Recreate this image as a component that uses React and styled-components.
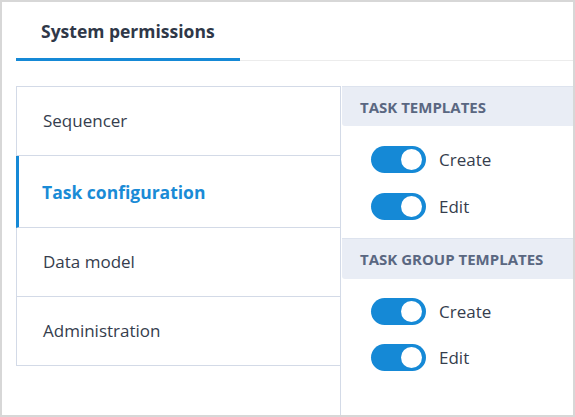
import React from "react";
import styled, { createGlobalStyle } from "styled-components";

const Global = createGlobalStyle`
  html, body { margin: 0; padding: 0; background: #ffffff; }
  * { box-sizing: border-box; }
  body { font-family: "Open Sans", "Liberation Sans", sans-serif; }
`;

const Frame = styled.div`
  width: 575px;
  height: 417px;
  border: 2px solid #d7d7d7;
  background: #ffffff;
  display: flex;
  flex-direction: column;
  overflow: hidden;
`;

const TabBar = styled.div`
  display: flex;
  margin-left: 14px;
  border-bottom: 1px solid #ececec;
`;

const Tab = styled.div`
  width: 224px;
  height: 59px;
  padding: 17px 0 0 25px;
  font-size: 17.5px;
  font-weight: 700;
  color: #2f3848;
  border-bottom: 3px solid ${(p) => (p.$active ? "#1589d6" : "transparent")};
  margin-bottom: -1px;
`;

const Body = styled.div`
  flex: 1;
  display: flex;
  margin: 25px 0 0 14px;
`;

const Nav = styled.div`
  width: 324px;
  align-self: flex-start;
  border-left: 1px solid #d3dae7;
  border-top: 1px solid #d3dae7;
`;

const NavItem = styled.div`
  height: ${(p) => (p.$h || 69)}px;
  display: flex;
  align-items: center;
  padding-left: ${(p) => (p.$active ? 23 : 26)}px;
  padding-bottom: ${(p) => (p.$active ? 0 : 2)}px;
  border-bottom: 1px solid #d3dae7;
  border-left: ${(p) => (p.$active ? "3px solid #1589d6" : "none")};
  margin-left: ${(p) => (p.$active ? "-1px" : "0")};
  font-size: ${(p) => (p.$active ? 17.5 : 17)}px;
  font-weight: ${(p) => (p.$active ? 700 : 400)};
  color: ${(p) => (p.$active ? "#1a8bd6" : "#353d4d")};
`;

const Panel = styled.div`
  flex: 1;
  border-left: 1px solid #d3dae7;
  display: flex;
  flex-direction: column;
`;

const SectionHeader = styled.div`
  height: ${(p) => p.$h}px;
  background: #e9edf5;
  border-top: 1px solid #dde3ee;
  border-radius: 0 0 0 3px;
  margin-left: 1px;
  display: flex;
  align-items: center;
  padding-left: 18px;
  font-size: 15px;
  font-weight: 700;
  color: #5a6781;
  text-transform: uppercase;
`;

const ToggleList = styled.div`
  display: flex;
  flex-direction: column;
  gap: ${(p) => p.$gap}px;
  padding: ${(p) => p.$pt}px 0 ${(p) => p.$pb}px 30px;
`;

const Row = styled.label`
  display: flex;
  align-items: center;
  gap: 13px;
  font-size: 17px;
  color: #353d4d;
`;

const Track = styled.span`
  position: relative;
  width: 55px;
  height: 27px;
  border-radius: 14px;
  background: #1589d6;
  flex: none;
`;

const Knob = styled.span`
  position: absolute;
  top: 3px;
  right: 4px;
  width: 21px;
  height: 21px;
  border-radius: 50%;
  background: #ffffff;
`;

function Toggle({ label }) {
  return (
    <Row>
      <Track>
        <Knob />
      </Track>
      {label}
    </Row>
  );
}

const navItems = [
  { label: "Sequencer" },
  { label: "Task configuration", active: true, h: 72 },
  { label: "Data model" },
  { label: "Administration" },
];

export default function App() {
  return (
    <>
      <Global />
      <Frame>
        <TabBar>
          <Tab $active>System permissions</Tab>
        </TabBar>
        <Body>
          <Nav>
            {navItems.map((n) => (
              <NavItem key={n.label} $active={n.active} $h={n.h}>
                {n.label}
              </NavItem>
            ))}
          </Nav>
          <Panel>
            <SectionHeader $h={40}>Task templates</SectionHeader>
            <ToggleList $gap={20} $pt={20} $pb={18}>
              <Toggle label="Create" />
              <Toggle label="Edit" />
            </ToggleList>
            <SectionHeader $h={41}>Task group templates</SectionHeader>
            <ToggleList $gap={19} $pt={19} $pb={0}>
              <Toggle label="Create" />
              <Toggle label="Edit" />
            </ToggleList>
          </Panel>
        </Body>
      </Frame>
    </>
  );
}
